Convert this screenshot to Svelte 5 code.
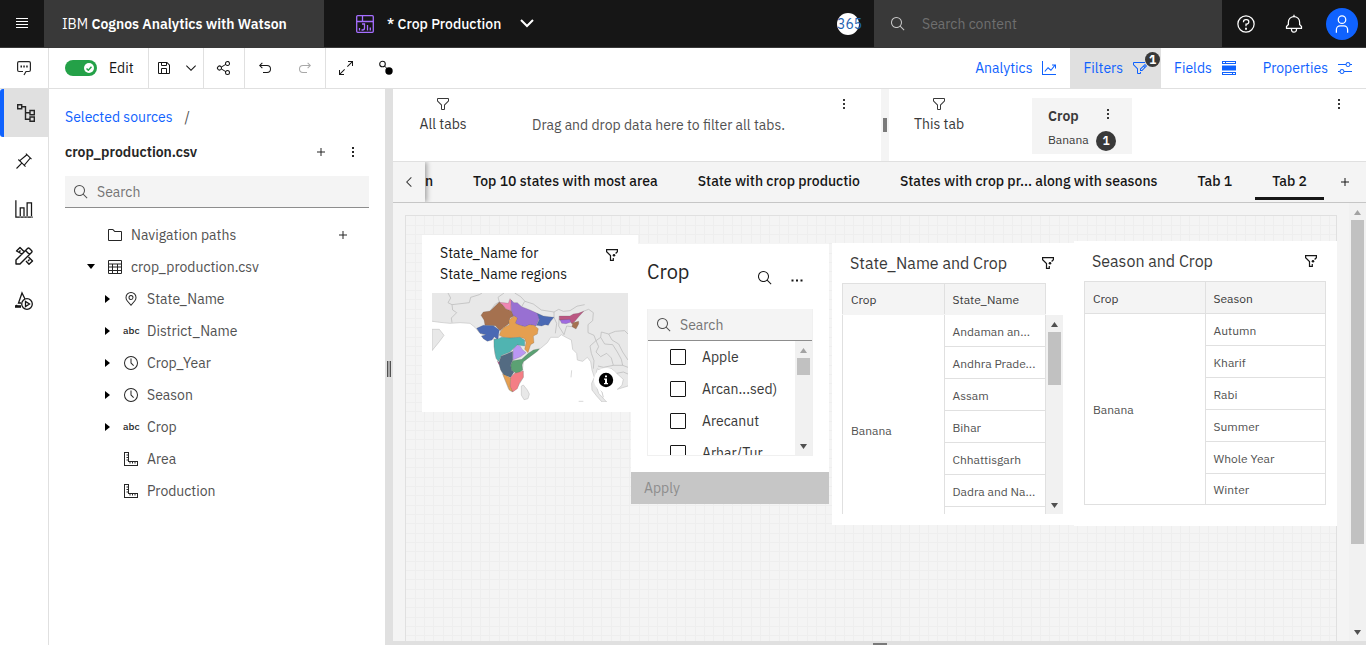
<script>
  const icons = {
    save: 'M27.71,9.29l-5-5A1,1,0,0,0,22,4H6A2,2,0,0,0,4,6V26a2,2,0,0,0,2,2H26a2,2,0,0,0,2-2V10A1,1,0,0,0,27.71,9.29ZM12,6h8v4H12Zm8,20H12V18h8Zm2,0V18a2,2,0,0,0-2-2H12a2,2,0,0,0-2,2v8H6V6h4v4a2,2,0,0,0,2,2h8a2,2,0,0,0,2-2V6.41l4,4V26Z',
    share: 'M23,20a5,5,0,0,0-3.89,1.89L11.8,17.32a4.46,4.46,0,0,0,0-2.64l7.31-4.57A5,5,0,1,0,18,7a4.79,4.79,0,0,0,.2,1.32l-7.31,4.57a5,5,0,1,0,0,6.22l7.31,4.57A4.79,4.79,0,0,0,18,25a5,5,0,1,0,5-5ZM23,4a3,3,0,1,1-3,3A3,3,0,0,1,23,4ZM7,19a3,3,0,1,1,3-3A3,3,0,0,1,7,19Zm16,9a3,3,0,1,1,3-3A3,3,0,0,1,23,28Z',
    undo: 'M20,10H7.8149l3.5874-3.5859L10,5,4,11,10,17l1.4023-1.4146L7.8179,12H20a6,6,0,0,1,0,12H12v2h8a8,8,0,0,0,0-16Z',
    redo: 'M12,10H24.1851L20.5977,6.4141,22,5,28,11,22,17l-1.4023-1.4146L24.1821,12H12a6,6,0,0,0,0,12h8v2H12a8,8,0,0,1,0-16Z',
    expand: 'M20,2V4h6.586L18,12.582,19.414,14,28,5.414V12h2V2ZM14,19.416,12.592,18,4,26.586V20H2V30H12V28H5.414Z',
    chevron: 'M16,22,6,12l1.4-1.4L16,19.2l8.6-8.6L26,12Z',
    chevronLeft: 'M10,16,20,6l1.4,1.4L12.8,16l8.6,8.6L20,26Z',
    search: 'M29,27.5859l-7.5521-7.5521a11.0177,11.0177,0,1,0-1.4141,1.4141L27.5859,29ZM4,13a9,9,0,1,1,9,9A9.01,9.01,0,0,1,4,13Z',
    add: 'M17,15V8H15v7H8v2h7v7h2V17h7V15Z',
    more: 'M14,6h4v4h-4ZM14,14h4v4h-4ZM14,22h4v4h-4Z',
    moreAcross: 'M5,19h4v4h-4ZM14,19h4v4h-4ZM23,19h4v4h-4Z',
    filter: 'M18,28H14a2,2,0,0,1-2-2V18.41L4.59,11A2,2,0,0,1,4,9.59V6A2,2,0,0,1,6,4H26a2,2,0,0,1,2,2V9.59A2,2,0,0,1,27.41,11L20,18.41V26A2,2,0,0,1,18,28ZM6,6V9.59l8,8V26h4V17.59l8-8V6Z',
    filterEdit: 'M26,6H4V9.17l7.41,7.42.59.58V26h4V24h2v2a2,2,0,0,1-2,2H12a2,2,0,0,1-2-2V18L2.59,10.59A2,2,0,0,1,2,9.17V6A2,2,0,0,1,4,4H26ZM29.71,11.29l-3-3a1,1,0,0,0-1.42,0L16,17.59V22h4.41l9.3-9.29A1,1,0,0,0,29.71,11.29ZM19.59,20H18V18.41l5-5L24.59,15ZM26,13.59,24.41,12,26,10.41,27.59,12Z',
    help: 'M16,2A14,14,0,1,0,30,16,14,14,0,0,0,16,2Zm0,26A12,12,0,1,1,28,16,12,12,0,0,1,16,28ZM14.5,22h3v3h-3ZM17,8H15.5A4.49,4.49,0,0,0,11,12.5V13h2v-.5A2.5,2.5,0,0,1,15.5,10H17a2.5,2.5,0,0,1,0,5H15v4.5h2V17a4.5,4.5,0,0,0,0-9Z',
    bell: 'M28.7071,19.293,26,16.5859V13a10.0136,10.0136,0,0,0-9-9.9492V1H15V3.0508A10.0136,10.0136,0,0,0,6,13v3.5859L3.2929,19.293A1,1,0,0,0,3,20v3a1,1,0,0,0,1,1h7v.7768a5.152,5.152,0,0,0,4.5,5.1987A5.0057,5.0057,0,0,0,21,25V24h7a1,1,0,0,0,1-1V20A1,1,0,0,0,28.7071,19.293ZM19,25a3,3,0,0,1-6,0V24h6Zm8-3H5V20.4141L7.707,17.707A1,1,0,0,0,8,17V13a8,8,0,0,1,16,0v4a1,1,0,0,0,.293.707L27,20.4141Z',
    user: 'M16,4a5,5,0,1,1-5,5,5,5,0,0,1,5-5m0-2a7,7,0,1,0,7,7A7,7,0,0,0,16,2ZM26,30H24V25a5,5,0,0,0-5-5H13a5,5,0,0,0-5,5v5H6V25a7,7,0,0,1,7-7h6a7,7,0,0,1,7,7Z',
    pin: 'M28.59,13.31,30,11.9,20,2,18.69,3.42,19.87,4.6,8.38,14.32,6.66,12.61,5.25,14l5.66,5.68L2,28.58,3.41,30l8.91-8.91L18,26.75l1.39-1.42-1.71-1.71L27.4,12.13ZM16.26,22.2,9.8,15.74,21.29,6,26,10.71Z',
    chart: 'M2,2H4V28H30V30H2ZM9,13H17V29H15V15H11V29H9ZM20,5H29V29H27V7H22V29H20Z',
    folder: 'M11.17,6l3.42,3.41.58.59H28V26H4V6h7.17m0-2H4A2,2,0,0,0,2,6V26a2,2,0,0,0,2,2H28a2,2,0,0,0,2-2V10a2,2,0,0,0-2-2H16L12.59,4.59A2,2,0,0,0,11.17,4Z',
    table: 'M4,2H28a2,2,0,0,1,2,2V28a2,2,0,0,1-2,2H4a2,2,0,0,1-2-2V4A2,2,0,0,1,4,2ZM4,4V9H28V4ZM4,11v4H10V11Zm8,0v4h8V11Zm10,0v4h6V11ZM4,17v5H10V17Zm8,0v5h8V17Zm10,0v5h6V17ZM4,24v4H10V24Zm8,0v4h8V24Zm10,0v4h6V24Z',
    place: 'M16,18a5,5,0,1,1,5-5A5.0057,5.0057,0,0,1,16,18Zm0-8a3,3,0,1,0,3,3A3.0033,3.0033,0,0,0,16,10ZM16,30,7.5645,20.0513c-.0479-.0571-.3482-.4515-.3482-.4515A10.8888,10.8888,0,0,1,5,13a11,11,0,0,1,22,0,10.8844,10.8844,0,0,1-2.2148,6.5973l-.0015.0025s-.3.3944-.3447.4474ZM8.8125,18.395c.001.0007.2334.3082.2866.3744L16,26.9079l6.91-8.15c.0439-.0552.2783-.3649.2788-.3657A8.901,8.901,0,0,0,25,13,9,9,0,1,0,7,13a8.9054,8.9054,0,0,0,1.8125,5.395Z',
    time: 'M16,30A14,14,0,1,1,30,16,14,14,0,0,1,16,30ZM16,4A12,12,0,1,0,28,16,12,12,0,0,0,16,4ZM20.59,22,15,16.41V7h2v8.58l5,5.01Z',
    measure: 'M2,2H12V20H30V30H2ZM4,4V28H28V22H25v3H23V22H20v3H18V22H15v3H13V22H10V19H7V17h3V14H7V12h3V9H7V7h3V4Z',
    trend: 'M2,2H4V28H30V30H2ZM7,22L14,14L20,19L26,11H22V9H30V17H28V12L20,22L14,17L8,24Z',
    fields: 'M2,2H30V8H2ZM4,4V6H8V4ZM10,4V6H28V4ZM2,11H30V21H2ZM2,24H30V30H2ZM4,26V28H22V26ZM24,26V28H28V26Z',
    sliders: 'M30,8H26.9A5,5,0,0,0,17.1,8H2v2H17.1a5,5,0,0,0,9.8,0H30ZM22,12a3,3,0,1,1,3-3A3,3,0,0,1,22,12ZM2,24H5.1a5,5,0,0,0,9.8,0H30V22H14.9a5,5,0,0,0-9.8,0H2Zm8-4a3,3,0,1,1-3,3A3,3,0,0,1,10,20Z'
  };

  const columns = [
    { label: 'State_Name', kind: 'place', open: true },
    { label: 'District_Name', kind: 'abc', open: true },
    { label: 'Crop_Year', kind: 'time', open: true },
    { label: 'Season', kind: 'time', open: true },
    { label: 'Crop', kind: 'abc', open: true },
    { label: 'Area', kind: 'measure' },
    { label: 'Production', kind: 'measure' }
  ];
  const tabs = ['n', 'Top 10 states with most area', 'State with crop productio', 'States with crop pr... along with seasons', 'Tab 1', 'Tab 2'];
  const crops = ['Apple', 'Arcan...sed)', 'Arecanut', 'Arhar/Tur'];
  const states = ['Andaman an...', 'Andhra Prade...', 'Assam', 'Bihar', 'Chhattisgarh', 'Dadra and Na...', ''];
  const seasons = ['Autumn', 'Kharif', 'Rabi', 'Summer', 'Whole Year', 'Winter'];

  const regions = [
    ['#a5714f', 'M208 36L218 44 228 57 244 62 252 78 240 84 236 102 222 112 210 122 196 107 165 106 162 90 153 76 160 66 180 63Z'],
    ['#ef86b3', 'M207 37L222 38 235 40 240 26 246 34 243 48 244 62 228 57 218 44Z'],
    ['#9870d2', 'M243 30L252 38 262 38 275 50 300 60 322 70 328 85 318 108 300 104 285 110 262 104 255 98 262 84 250 78 244 60Z'],
    ['#e59f50', 'M208 136L212 124 222 112 238 104 236 92 244 84 254 78 262 84 256 100 270 106 285 110 298 104 312 106 325 116 322 132 310 138 312 158 302 164 294 188 284 178 288 158 284 146 270 142 240 144 220 142Z'],
    ['#4a69b4', 'M322 70L340 78 356 80 372 82 362 94 355 106 345 104 335 108 320 106 328 88Z'],
    ['#4a69b4', 'M140 115L160 106 190 107 208 120 206 132 204 150 193 140 186 150 172 154 160 146 154 138 168 134 150 130Z'],
    ['#50b4b1', 'M192 148L206 146 214 142 240 144 270 142 284 150 284 168 262 165 248 178 240 186 215 196 206 214 198 205 192 170Z'],
    ['#bb97f4', 'M250 178L262 164 272 170 276 178 288 188 272 200 248 210Z'],
    ['#5ba173', 'M328 176L310 180 295 190 275 208 248 212 242 225 244 240 262 252 278 240 276 225 280 215 300 200 322 184Z'],
    ['#536b82', 'M248 184L248 210 242 225 244 240 252 246 242 262 222 255 212 240 206 218 214 198 230 192Z'],
    ['#f47e85', 'M242 262L254 250 280 243 280 262 268 280 262 296 248 306 240 290Z'],
    ['#e59f50', 'M218 252L230 258 242 264 240 288 248 305 238 300 228 276Z'],
    ['#bb5782', 'M388 78L420 78 430 72 445 70 462 63 448 78 436 92 426 102 418 90 388 90Z'],
    ['#a06be0', 'M390 90L420 88 422 97 408 101 395 100Z'],
    ['#a5714f', 'M428 98L446 94 446 102 438 117 426 110Z'],
    ['#d0408a', 'M202 214L208 218 208 224Z']
  ];
</script>

{#snippet icon(name, size = 16)}
  <svg class="icon" width={size} height={size} viewBox="0 0 32 32" fill-rule="evenodd" aria-hidden="true"><path d={icons[name]} /></svg>
{/snippet}

{#snippet filterMark()}
  <svg class="mark" width="14" height="14" viewBox="-1 -1 14 14" fill="none" stroke="#161616" stroke-width="1.200" aria-hidden="true">
    <path d="M9.600 4.500L11.400 2.700V.6H.6V2.700L4.500 6.600V11.400H7.300V9" /><circle cx="8" cy="6.200" r="1.300" fill="#161616" stroke="none" />
  </svg>
{/snippet}

{#snippet scrollbar(kind)}
  <div class="scrollbar {kind}" aria-hidden="true">
    <svg width="9" height="5" viewBox="0 0 9 5"><path d="M1 5L4.500 0L8 5Z" /></svg>
    <span class="thumb"></span>
    <svg class="down" width="9" height="5" viewBox="0 0 9 5"><path d="M1 0H8L4.500 5Z" /></svg>
  </div>
{/snippet}

<div class="app">
  <header>
    <button class="menu" aria-label="Menu">
      <svg width="12" height="11" viewBox="0 0 12 11"><path d="M0 .5H12M0 3.500H12M0 6.500H12M0 9.500H12" stroke="#fff" /></svg>
    </button>
    <div class="brand">IBM&nbsp;<b>Cognos Analytics with Watson</b></div>
    <button class="document">
      <svg width="18" height="18" viewBox="0 0 18 18" fill="none" stroke="#a56eff" stroke-width="1.300">
        <rect x=".7" y=".7" width="16.600" height="16.600" rx="1" /><path d="M.7 6.500H17.300M6.500.7V6.500M6 9H8.500V13Q8.500 15 6.500 15H5.500M3.500 13V15.600M11.500 10V15.500M14.300 12.500V15.500" />
      </svg>
      <span>* Crop Production</span>
      <svg width="14" height="9" viewBox="0 0 14 9" fill="none" stroke="#fff" stroke-width="2"><path d="M1 1L7 7L13 1" /></svg>
    </button>
    <span class="plan">365</span>
    <label class="site-search">{@render icon('search')}<input aria-label="Search content" placeholder="Search content" /></label>
    <button class="head-btn" aria-label="Help">{@render icon('help', 20)}</button>
    <button class="head-btn" aria-label="Notifications">{@render icon('bell', 20)}</button>
    <button class="head-btn" aria-label="Account"><span class="avatar">{@render icon('user', 20)}</span></button>
  </header>

  <div class="toolbar">
    <div class="cell chat">
      <button aria-label="Assistant">
        <svg width="16" height="16" viewBox="0 0 16 16" fill="none" stroke="#262626" stroke-width="1.200"><path d="M8 15L10 11.500H13Q14.400 11.500 14.400 10V3Q14.400 1.600 13 1.600H3Q1.600 1.600 1.600 3V10Q1.600 11.500 3 11.500H7" /><path d="M4.500 6.500H6M7.300 6.500H8.800M10.200 6.500H11.700" stroke-width="1.800" /></svg>
      </button>
    </div>
    <div class="cell edit">
      <label><span class="switch"><input type="checkbox" role="switch" checked /><svg width="6" height="5" viewBox="0 0 6 5" fill="none" stroke="#24a148" stroke-width="1.500"><path d="M.5 2.500L2.300 4.200L5.500 .8" /></svg></span>Edit</label>
    </div>
    <div class="cell save">
      <button aria-label="Save">{@render icon('save')}</button>
      <button aria-label="Save options">{@render icon('chevron')}</button>
    </div>
    <div class="cell"><button aria-label="Share">{@render icon('share')}</button></div>
    <div class="cell">
      <button aria-label="Undo">{@render icon('undo')}</button>
      <button aria-label="Redo" disabled>{@render icon('redo')}</button>
    </div>
    <div class="cell last">
      <button aria-label="Full screen">{@render icon('expand')}</button>
      <button aria-label="Link widgets"><svg width="16" height="16" viewBox="0 0 16 16"><circle cx="4.500" cy="4" r="2.800" fill="none" stroke="#161616" stroke-width="1.100" /><path d="M6.500 6L10 9.500" stroke="#161616" /><circle cx="11" cy="11" r="3.700" /></svg></button>
    </div>
    <nav class="tools" aria-label="Panels">
      <button>Analytics {@render icon('trend')}</button>
      <button class="on">Filters <span class="badged">{@render icon('filterEdit')}<i class="badge">1</i></span></button>
      <button>Fields {@render icon('fields')}</button>
      <button>Properties {@render icon('sliders')}</button>
    </nav>
  </div>

  <div class="body">
    <nav class="rail" aria-label="Views">
      <button class="on" aria-label="Sources"><svg width="20" height="20" viewBox="0 0 20 20" fill="none" stroke="#262626" stroke-width="1.400"><path d="M1.700 1.700H5.700V5.700H1.700ZM14 7.500H18.300V11.800H14ZM14 14H18.300V18.300H14ZM5.700 3.700H9.500V16.200H14M9.500 9.700H14" /></svg></button>
      <button aria-label="Pins">{@render icon('pin', 18)}</button>
      <button aria-label="Visualizations">{@render icon('chart', 20)}</button>
      <button class="short" aria-label="Widgets">
        <svg width="20" height="20" viewBox="0 0 20 20" fill="none" stroke="#161616" stroke-width="1.400" stroke-linejoin="round"><path d="M2 18V14L13.500 2.500Q14.500 1.500 15.500 2.500L17.500 4.500Q18.500 5.500 17.500 6.500L6 18ZM11.500 4.500L15.500 8.500M8 8L2.500 5L6 1.500L10 5.500M12 15L15 18.300L18.500 15L14.500 11M5 6L6.500 4.500M15.500 13.500L14 15" /></svg>
      </button>
      <button class="short" aria-label="Media">
        <svg width="20" height="20" viewBox="0 0 20 20" fill="none" stroke="#161616" stroke-width="1.300"><path d="M7 12H4.500L8 2L11 8M3.300 14L2 15" /><path d="M1 15.500H7" stroke-width="2.600" /><circle cx="13" cy="13" r="5.300" /><path d="M11.500 10.500V15.500L15.500 13Z" /></svg>
      </button>
    </nav>

    <aside>
      <div class="crumbs"><a href="#sources">Selected sources</a><span>/</span></div>
      <div class="source"><b>crop_production.csv</b><button aria-label="Add source">{@render icon('add')}</button><button aria-label="Source options">{@render icon('more')}</button></div>
      <label class="search">{@render icon('search')}<input aria-label="Search sources" placeholder="Search" /></label>
      <ul class="tree">
        <li class="root"><span></span>{@render icon('folder', 16)}<span>Navigation paths</span><button aria-label="Add path">{@render icon('add')}</button></li>
        <li class="root"><svg class="caret" width="10" height="6" viewBox="0 0 10 6"><path d="M1 0H9L5 5Z" /></svg>{@render icon('table', 16)}<span>crop_production.csv</span></li>
        {#each columns as c}
          <li>
            {#if c.open}<svg class="caret" width="6" height="10" viewBox="0 0 6 10"><path d="M0 1V9L5 5Z" /></svg>{:else}<span></span>{/if}
            {#if c.kind === 'abc'}<span class="abc">abc</span>{:else}{@render icon(c.kind, 16)}{/if}
            <span>{c.label}</span>
          </li>
        {/each}
      </ul>
    </aside>
    <div class="splitter"></div>

    <main>
      <div class="filters">
        <section>
          <div class="scope">{@render icon('filter')}<span>All tabs</span></div>
          <p>Drag and drop data here to filter all tabs.</p>
          <button class="dots" aria-label="All tabs options">{@render icon('more')}</button>
        </section>
        <div class="grip"></div>
        <section>
          <div class="scope">{@render icon('filter')}<span>This tab</span></div>
          <div class="chip">
            <b>Crop</b><button aria-label="Crop filter options">{@render icon('more')}</button>
            <span>Banana</span><i>1</i>
          </div>
          <button class="dots" aria-label="This tab options">{@render icon('more')}</button>
        </section>
      </div>

      <div class="tabbar">
        <button class="back" aria-label="Scroll tabs back">{@render icon('chevronLeft')}</button>
        <div class="tabs" role="tablist">
          {#each tabs as t, i}
            <button role="tab" aria-selected={i === tabs.length - 1}>{t}</button>
          {/each}
        </div>
        <button class="new" aria-label="Add tab">{@render icon('add')}</button>
      </div>

      <div class="canvas">
        <div class="pad">
          <div class="sheet">
            <article class="card map">
              <div class="title"><h2>State_Name for State_Name regions</h2>{@render filterMark()}</div>
              <div class="plot">
                <svg viewBox="6 9 588 327" role="img" aria-label="Map of regions">
                  <g fill="#e8e8e8" stroke="#c4c4c4" stroke-width="2" stroke-linejoin="round">
                    <path d="M0 0V93L30 97 60 100 90 98 120 100 135 112 150 130 192 148 194 190 206 220 222 262 236 298 246 306 262 292 280 262 278 235 280 215 300 200 328 178 352 158 362 142 385 142 394 134 408 142 424 150 428 178 440 190 442 210 458 214 472 202 482 215 486 240 493 262 485 280 486 300 500 318 516 336 530 336 506 310 498 285 496 262 502 236 520 248 545 236 560 250 580 268 576 286 562 298 594 288 600 280V0Z" />
                    <path d="M6 118L28 118 42 136 28 155 6 182Z" /><path d="M274 288L280 285 292 300 298 312 294 326 282 329 274 315Z" /><path d="M425 241L423 262" /><path d="M446 334H460" />
                  </g>
                  <path fill="none" stroke="#b5b5b5" stroke-width="2" stroke-linejoin="round" d="M54 9L62 24 54 38 66 44 68 60 80 68 64 84 66 98M66 44L118 38 122 22 148 14 156 9M180 63L196 42 208 36 204 22 222 9M254 9L272 20 285 34 310 42 334 60 372 66 386 58 400 64 420 62M275 50L284 34M372 66L372 82 380 100 376 130M388 78L386 108 402 134M402 134L410 108 426 110M420 62Q440 44 464 44M462 63L476 58 490 68 488 92 474 104 474 128 492 136 498 152 480 168 484 190 492 212 490 236M498 152L512 142 514 126 536 132 556 124 584 122 594 132M498 152L506 170 498 186 512 200 530 190 544 204 550 226 520 232 504 228M512 142L524 162 548 164 562 186 574 208 578 226 550 226M536 132L546 150 566 162 578 186 594 210M578 226L594 232M560 250L580 246 594 252M498 288L516 306 520 322" />
                  <g stroke="#55555566" stroke-width="1.500" stroke-linejoin="round">
                    {#each regions as [fill, d]}<path {fill} {d} />{/each}
                  </g>
                </svg>
                <button class="info" aria-label="Map information"><svg width="16" height="16" viewBox="0 0 16 16"><circle cx="8" cy="8" r="7.200" /><path d="M7 3.500H9V5.300H7ZM6 6.500H9V11H10V12.300H6V11H7V7.800H6Z" fill="#fff" /></svg></button>
              </div>
            </article>

            <article class="card picker">
              <div class="title"><h2>Crop</h2><button aria-label="Search crops">{@render icon('search')}</button><button aria-label="Crop options">{@render icon('moreAcross')}</button></div>
              <div class="box">
                <label class="search">{@render icon('search')}<input aria-label="Search crop list" placeholder="Search" /></label>
                <div class="scroller">
                  <div class="options">
                    {#each crops as c}<label><input type="checkbox" />{c}</label>{/each}
                  </div>
                  {@render scrollbar('short-thumb')}
                </div>
              </div>
              <button class="apply" disabled>Apply</button>
            </article>

            <article class="card states">
              <div class="title"><h2>State_Name and Crop</h2>{@render filterMark()}</div>
              <div class="scroller">
                <table>
                  <thead><tr><th>Crop</th><th>State_Name</th></tr></thead>
                  <tbody>
                    {#each states as s, i}
                      <tr>{#if i === 0}<td rowspan={states.length}>Banana</td>{/if}<td>{s}</td></tr>
                    {/each}
                  </tbody>
                </table>
                {@render scrollbar('mid-thumb')}
              </div>
            </article>

            <article class="card seasons">
              <div class="title"><h2>Season and Crop</h2>{@render filterMark()}</div>
              <table>
                <thead><tr><th>Crop</th><th>Season</th></tr></thead>
                <tbody>
                  {#each seasons as s, i}
                    <tr>{#if i === 0}<td rowspan={seasons.length}>Banana</td>{/if}<td>{s}</td></tr>
                  {/each}
                </tbody>
              </table>
            </article>
          </div>
        </div>
        {@render scrollbar('page-thumb')}
      </div>
      <div class="bottom"></div>
    </main>
  </div>
</div>

<style>
  :global(body) { margin: 0; }
  .app { height: 100vh; display: flex; flex-direction: column; overflow: hidden; background: #fff; color: #161616; font: 14px/20px "IBM Plex Sans", Roboto, "Liberation Sans", sans-serif; }
  .app * { box-sizing: border-box; }
  button { display: flex; align-items: center; justify-content: center; border: 0; padding: 0; background: none; color: inherit; font: inherit; }
  input { font: inherit; color: inherit; border: 0; background: none; padding: 0; margin: 0; min-width: 0; outline: 0; }
  h2, p, ul { margin: 0; padding: 0; font-weight: 400; }
  i { font-style: normal; }
  b { font-weight: 600; }
  .icon { fill: currentColor; flex: none; }
  svg { flex: none; }

  header { flex: none; display: flex; height: 48px; background: #161616; color: #fff; border-bottom: 1px solid #393939; }
  .menu { width: 44px; }
  .brand { width: 280px; display: flex; align-items: center; padding-left: 18px; background: #393939; }
  .document { gap: 13px; padding-left: 32px; font-weight: 500; }
  .document svg:last-child { margin-left: 6px; }
  .plan { width: 22px; height: 22px; margin: 13px 15px 0 auto; border-radius: 50%; background: #fff; color: #1f62ae; line-height: 22px; }
  .site-search { width: 348px; display: flex; align-items: center; gap: 16px; padding: 0 16px; background: #393939; color: #c6c6c6; }
  .site-search input { flex: 1; }
  .site-search input::placeholder { color: #6f6f6f; }
  .head-btn { width: 48px; }
  .avatar { display: grid; place-items: center; width: 32px; height: 32px; border-radius: 50%; background: #0f62fe; }

  .toolbar { flex: none; display: flex; height: 41px; border-bottom: 1px solid #e0e0e0; }
  .cell { display: flex; border-right: 1px solid #e0e0e0; }
  .cell button { width: 40px; }
  .cell.last { border: 0; }
  .cell.chat { width: 49px; justify-content: center; }
  .cell.edit { width: 100px; padding-left: 16px; }
  .cell.save button { width: 30px; }
  .cell.save button + button { width: 24px; }
  .cell button:disabled { color: #a8a8a8; }
  .edit label { display: flex; align-items: center; gap: 12px; }
  .switch { position: relative; display: flex; }
  .switch input { appearance: none; width: 32px; height: 16px; border-radius: 8px; background: #24a148; }
  .switch input::after { content: ""; display: block; width: 10px; height: 10px; margin: 3px 3px 0 auto; border-radius: 50%; background: #fff; }
  .switch svg { position: absolute; right: 5px; top: 6px; }
  .tools { display: flex; margin-left: auto; }
  .tools button { gap: 9px; padding: 0 13px; color: #0f62fe; }
  .tools .on { background: #e0e0e0; }
  .badged { position: relative; display: flex; }
  .badge { position: absolute; left: 13px; top: -8px; width: 15px; height: 15px; border-radius: 50%; background: #393939; color: #fff; font-size: 12px; line-height: 15px; font-weight: 700; text-align: center; }

  .body { flex: 1; min-height: 0; display: flex; }
  .rail { width: 49px; border-right: 1px solid #e0e0e0; }
  .rail button { width: 48px; height: 48px; }
  .rail .short { height: 45px; }
  .rail .on { background: #e0e0e0; border-left: 4px solid #0f62fe; border-radius: 3px 0 0 3px; }
  aside { width: 336px; padding: 18px 16px 0; }
  .crumbs { display: flex; gap: 12px; color: #525252; }
  a { color: #0f62fe; text-decoration: none; }
  .source { display: flex; align-items: center; height: 32px; margin-top: 9px; color: #262626; }
  .source b { flex: 1; }
  .source button { width: 32px; height: 32px; }
  .search { display: flex; align-items: center; gap: 8px; height: 32px; padding-left: 8px; background: #f4f4f4; border-bottom: 1px solid #8d8d8d; color: #525252; }
  .search input::placeholder { color: #757575; opacity: 1; }
  .search input { width: 100%; }
  aside .search { margin-top: 8px; }
  .tree { list-style: none; padding-top: 11px; color: #525252; }
  .tree li { display: grid; grid-template-columns: 10px 16px 1fr 32px; column-gap: 8px; align-items: center; height: 32px; padding: 0 10px 0 40px; }
  .tree .root { padding-left: 21px; grid-template-columns: 13px 16px 1fr 32px; }
  .tree .icon { color: #262626; }
  .tree li > button { height: 32px; color: #262626; }
  .abc { font-size: 10px; font-weight: 500; line-height: 16px; color: #262626; text-align: center; }
  .splitter { width: 8px; background: linear-gradient(90deg, #525252 1px, #a8a8a8 1px 3px, #525252 3px) 2px 272px / 4px 16px no-repeat #e0e0e0; }

  main { flex: 1; min-width: 0; display: flex; flex-direction: column; }
  .filters { display: grid; grid-template-columns: 488fr 8px 477fr; height: 73px; border-bottom: 1px solid #e0e0e0; color: #393939; }
  .filters section { display: flex; }
  .scope { width: 100px; display: flex; flex-direction: column; align-items: center; gap: 2px; padding-top: 7px; }
  .filters p { padding: 26px 0 0 39px; color: #525252; }
  .dots { width: 16px; height: 16px; margin: 7px 29px 0 auto; }
  section:last-child .dots { margin-right: 19px; }
  .grip { background: linear-gradient(#7a7a7a, #7a7a7a) 2px 29px / 4px 14px no-repeat #f4f4f4; }
  .chip { display: grid; grid-template-columns: 48px 20px; align-content: start; align-items: center; width: 100px; height: 56px; margin: 9px 0 0 43px; padding: 6px 16px; background: #f4f4f4; }
  .chip b { line-height: 24px; }
  .chip span { font-size: 12px; }
  .chip button { align-self: start; height: 20px; width: 24px; }
  .chip i { width: 20px; height: 20px; margin-top: 3px; border-radius: 50%; background: #393939; color: #fff; font-size: 12px; font-weight: 600; text-align: center; }

  .tabbar { display: flex; height: 41px; background: #f4f4f4; border-bottom: 1px solid #c6c6c6; }
  .back { flex: none; width: 32px; z-index: 1; box-shadow: 2px 0 5px #0005; background: #f4f4f4; color: #393939; clip-path: inset(0 -9px 0 0); }
  .tabs { flex: 1; min-width: 0; display: flex; justify-content: flex-end; gap: 6px; overflow: hidden; }
  .tabs button { flex: none; padding: 0 17px; font-weight: 500; border: solid transparent; border-width: 3px 0; height: 38px; }
  .tabs [aria-selected="true"] { border-bottom-color: #161616; }
  .new { width: 42px; }

  .canvas { flex: 1; min-height: 0; display: flex; background: #f4f4f4; }
  .pad { flex: 1; min-width: 0; padding: 12px 12px 0; }
  .sheet { position: relative; height: 100%; border: 1px solid #e0e0e0; border-bottom: 0;
    background-image:
      linear-gradient(90deg, transparent 9px, #eeeeee 9px 10px, transparent 10px 18px, #eeeeee 18px 19px, transparent 19px 27px, #eeeeee 27px),
      linear-gradient(transparent 9px, #eeeeee 9px 10px, transparent 10px 18px, #eeeeee 18px 19px, transparent 19px 27px, #eeeeee 27px);
    background-size: 28px 28px; }
  .bottom { height: 4px; background: linear-gradient(#7a7a7a, #7a7a7a) center 2px / 14px 2px no-repeat #e0e0e0; }
  .card { position: absolute; background: #fff; }
  .title { display: flex; }
  .title h2 { flex: 1; font-size: 16px; line-height: 24px; color: #393939; }
  .map { z-index: 1; left: 16px; top: 19px; width: 216px; height: 177px; padding: 8px 10px 0; }
  .map .title { padding: 0 9px 0 8px; height: 50px; }
  .map h2 { font-size: 14px; line-height: 21px; color: #161616; padding-right: 30px; }
  .mark { margin-top: 5px; }
  .plot { position: relative; }
  .plot > svg { display: block; width: 100%; }
  .info { position: absolute; right: 10px; bottom: 10px; width: 24px; height: 24px; border-radius: 50%; background: #fff; }

  .picker { left: 225px; top: 27px; width: 198px; border-top: 1px solid #f4f4f4; }
  .picker .title { height: 65px; padding: 16px 16px 0; }
  .picker h2 { font-size: 20px; color: #262626; }
  .picker .title button { width: 32px; height: 36px; }
  .box { margin: 0 16px; border: 1px solid #f0f0f0; border-top: 0; }
  .picker .scroller { display: flex; height: 114px; }
  .options { flex: 1; overflow: hidden; }
  .options label { display: flex; align-items: center; gap: 16px; height: 32px; padding-left: 22px; color: #393939; }
  .options input { appearance: none; width: 16px; height: 16px; border: 1px solid #161616; border-radius: 1px; }
  .apply { width: 100%; height: 32px; margin-top: 16px; padding-left: 13px; justify-content: flex-start; background: #c6c6c6; color: #8d8d8d; }

  .states { left: 426px; top: 27px; width: 243px; height: 282px; padding: 8px 12px 0 10px; }
  .seasons { left: 668px; top: 25px; width: 263px; height: 285px; padding: 8px 11px 0 10px; }
  .states .title, .seasons .title { height: 32px; padding: 0 8px; }
  .states .scroller { display: flex; height: 231px; overflow: hidden; align-items: flex-start; }
  .states .scroller :global(.scrollbar) { margin-top: 32px; height: 199px; }
  table { table-layout: fixed; width: 100%; border-collapse: collapse; font-size: 12px; line-height: 16px; color: #525252; }
  .states table { width: 204px; }
  th, td { height: 32px; padding: 2px 8px 0; border: 1px solid #e0e0e0; text-align: left; font-weight: 400; }
  th { background: #f4f4f4; color: #393939; }
  .states th { height: 31px; border-bottom-color: #f4f4f4; }
  .states tr:last-child td:only-child { height: 38px; }
  .seasons tr:last-child td:only-child { height: 31px; }

  .scrollbar { flex: none; width: 17px; display: flex; flex-direction: column; align-items: center; padding: 7px 0 6px; background: #f1f1f1; fill: #505050; }
  .thumb { width: 13px; margin: 5px 0 auto; background: #c1c1c1; }
  .short-thumb .thumb { height: 17px; }
  .mid-thumb .thumb { height: 53px; }
  .page-thumb .thumb { height: 324px; }
  .short-thumb svg:first-child, .page-thumb svg:first-child { fill: #a3a3a3; }
</style>
